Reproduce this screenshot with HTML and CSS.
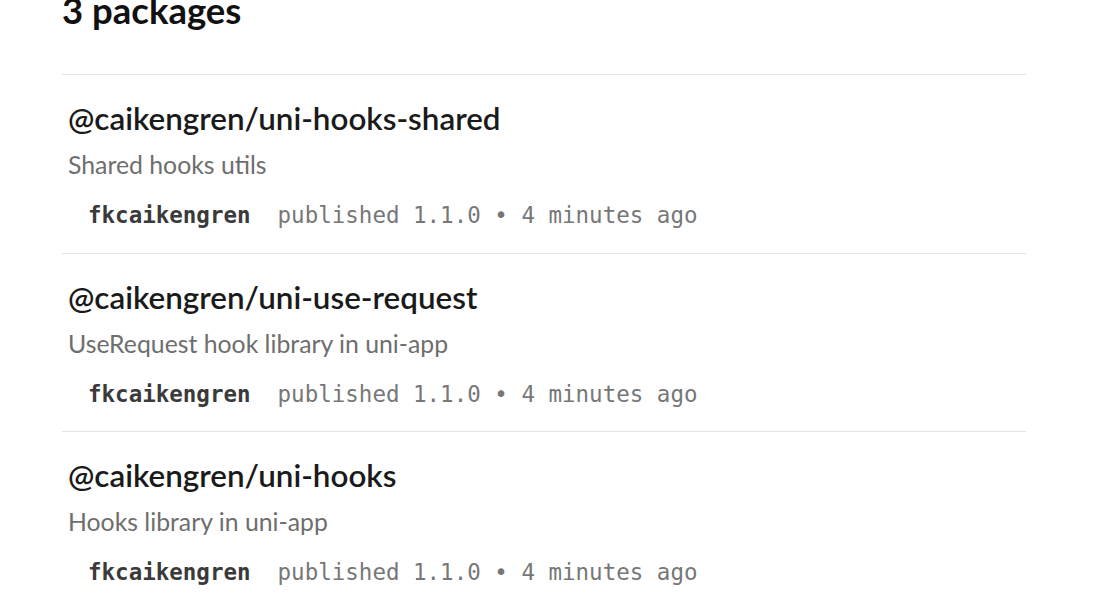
FILE: index.html
```html
<!DOCTYPE html>
<html lang="en">
<head>
<meta charset="utf-8">
<title>3 packages</title>
<link rel="stylesheet" href="styles.css">
</head>
<body>
<main class="page">
  <h2 class="count">3 packages</h2>
  <ul class="list">
    <li class="pkg">
      <h3 class="pkg-name">@caikengren/uni-hooks-shared</h3>
      <p class="pkg-desc">Shared hooks utils</p>
      <div class="pkg-meta"><span class="pkg-user">fkcaikengren</span><span class="pkg-pub">published 1.1.0 • 4 minutes ago</span></div>
    </li>
    <li class="pkg">
      <h3 class="pkg-name">@caikengren/uni-use-request</h3>
      <p class="pkg-desc">UseRequest hook library in uni-app</p>
      <div class="pkg-meta"><span class="pkg-user">fkcaikengren</span><span class="pkg-pub">published 1.1.0 • 4 minutes ago</span></div>
    </li>
    <li class="pkg">
      <h3 class="pkg-name">@caikengren/uni-hooks</h3>
      <p class="pkg-desc">Hooks library in uni-app</p>
      <div class="pkg-meta"><span class="pkg-user">fkcaikengren</span><span class="pkg-pub">published 1.1.0 • 4 minutes ago</span></div>
    </li>
  </ul>
</main>
</body>
</html>
```
FILE: styles.css
```css
html, body {
  margin: 0;
  padding: 0;
  background: #ffffff;
  overflow: hidden;
}
body {
  font-family: "Lato", "Open Sans", sans-serif;
  color: #111111;
}
.page {
  width: 964px;
  margin-left: 62px;
}
.count {
  margin: -12px 0 0 0;
  font-size: 36.5px;
  line-height: 44px;
  font-weight: 700;
  color: #111111;
  height: 86px;
  box-sizing: border-box;
}
.list {
  list-style: none;
  margin: 0;
  padding: 0;
}
.pkg {
  border-top: 1px solid #e2e2e2;
  padding: 24px 0 0 6px;
  height: 178.5px;
  box-sizing: border-box;
}
.pkg-name {
  margin: 0;
  font-size: 31.4px;
  line-height: 38px;
  font-weight: 600;
  color: #1a1a1a;
}
.pkg-desc {
  margin: 13px 0 0 0;
  font-size: 24.8px;
  line-height: 30px;
  color: #6e6e6e;
}
.pkg-meta {
  margin: 20px 0 0 20px;
  font-family: "DejaVu Sans Mono", "Liberation Mono", monospace;
  font-size: 22.5px;
  line-height: 30px;
  color: #777777;
}
.pkg-user {
  font-weight: 700;
  color: #3a3a3a;
  margin-right: 27px;
}
```
